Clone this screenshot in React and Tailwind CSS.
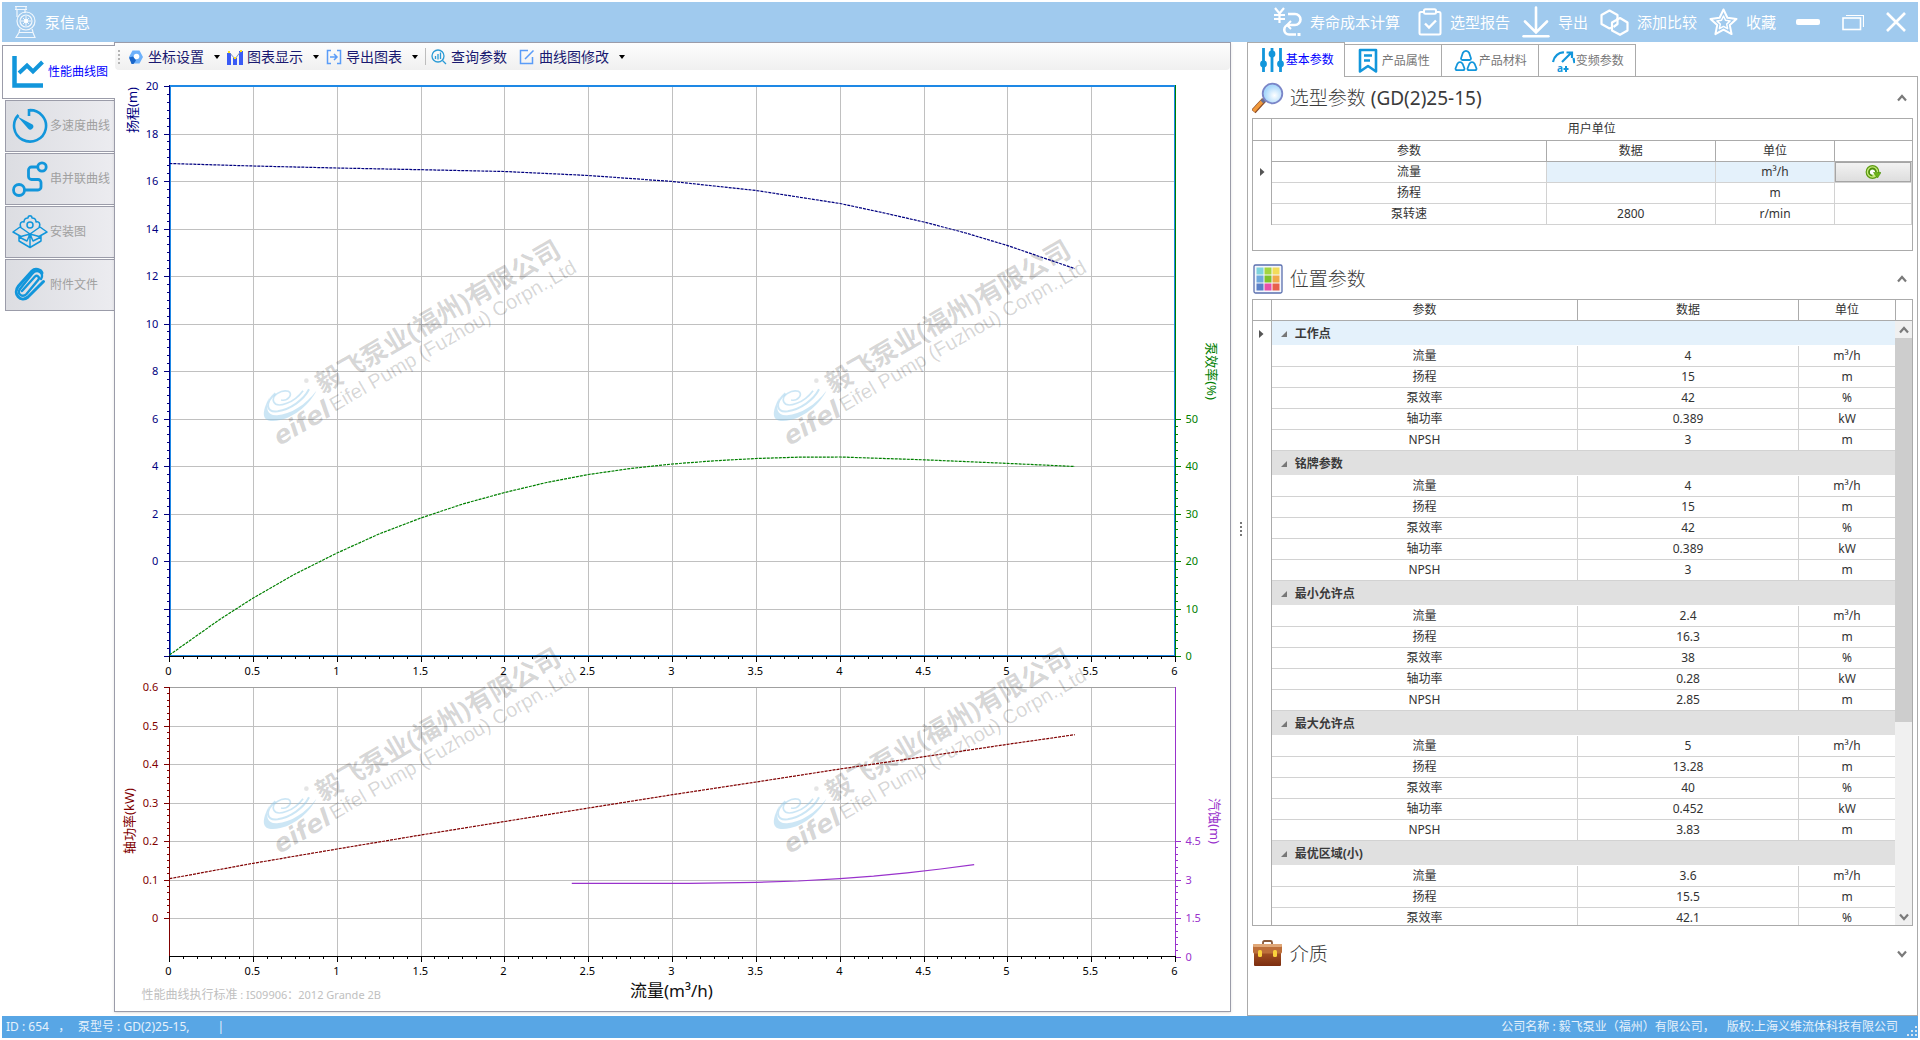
import React from "react";

const BLUE = "#1296db";

/* ---------- title bar icons ---------- */

const PumpIcon = () => (
  <svg viewBox="0 0 22 34" className="h-[34px] w-[22px]" fill="none" stroke="#fff" strokeOpacity="0.85" strokeWidth="1.2">
    <path d="M1 1.5h12M1 4.5h12M2 2v3M12 2v3M3 5v7M11 5v3" />
    <circle cx="12" cy="16" r="9" />
    <circle cx="12" cy="16" r="6" />
    <path d="M12 11v10M7 16h10M9 13l6 6M15 13l-6 6" strokeWidth="1" />
    <circle cx="12" cy="16" r="1.6" fill="#fff" />
    <path d="M6 24l-1 3M18 24l1 3M5 27.5h14l2 5H2z" />
  </svg>
);

const CostIcon = () => (
  <svg viewBox="0 0 28 30" className="h-[30px] w-7" fill="none" stroke="#fff" strokeWidth="2.6">
    <path d="M1 1l4.500 5.500L10 1M5.500 6v10M0 8h11M0 12h11" strokeWidth="2.200" />
    <path d="M14 7h7a5.500 5.500 0 0 1 0 11h-6a4.500 4.500 0 0 0 0 9.500h7" />
    <path d="M17 14l-4 4 4 4" strokeWidth="2" />
    <path d="M25 26v3" strokeWidth="3" />
  </svg>
);

const ReportIcon = () => (
  <svg viewBox="0 0 24 28" className="h-7 w-6" fill="none" stroke="#fff" strokeWidth="2">
    <rect x="1.500" y="4" width="21" height="22.500" rx="1.500" />
    <rect x="6" y="1.200" width="12" height="4.500" rx="1.500" fill="#a0caee" />
    <path d="M7 15.500l4 4 7-7" strokeWidth="2.400" />
  </svg>
);

const ExportIcon = () => (
  <svg viewBox="0 0 28 32" className="h-8 w-7" fill="none" stroke="#fff" strokeWidth="3" strokeLinecap="round">
    <path d="M14 1.500V26M3 15.500L14 26.500 25 15.500" strokeWidth="2.600" />
    <path d="M1.500 30.300h25" strokeWidth="2.400" />
  </svg>
);

const CompareIcon = () => (
  <svg viewBox="0 0 29 27" className="h-[27px] w-[29px]" fill="none" stroke="#fff" strokeWidth="2.200" strokeLinejoin="round">
    <path d="M12 18.500l-2.500 1L1.500 15V6L9.500 1.500l8 4.500v4" />
    <path d="M12 13.500l8-4.500 7.500 4.500v8L20 25.800l-8-4.300z" />
    <path d="M17.500 9v6l-4 3" />
  </svg>
);

const StarIcon = () => (
  <svg viewBox="0 0 29 28" className="h-7 w-[29px]" fill="none" stroke="#fff" strokeLinejoin="round">
    <path d="M14.500 1.500l3.900 8.300 9.100 1.100-6.700 6.200 1.800 9-8.100-4.500-8.100 4.500 1.800-9L1.500 10.900l9.100-1.100z" strokeWidth="2" />
    <path d="M14.500 8l2 4.300 4.600.6-3.400 3.200.9 4.600-4.100-2.300-4.100 2.300.9-4.600-3.400-3.200 4.600-.6z" strokeWidth="1.500" />
  </svg>
);

/* ---------- side navigation icons ---------- */

const LineChartIcon = () => (
  <svg viewBox="0 0 36 36" className="size-9" fill="none" stroke={BLUE}>
    <path d="M2.500 2v29.500H31" strokeWidth="4.500" />
    <path d="M7 19l8-7.500 6 6L30.500 8" strokeWidth="4" />
  </svg>
);

const GaugeIcon = () => (
  <svg viewBox="0 0 36 36" className="size-9" fill="none" stroke={BLUE} strokeWidth="2.600">
    <path d="M17 8V2.200A16 15.700 0 1 1 6.500 7" />
    <path d="M5.500 8.500l15 8a3 3 0 1 1-4.500 4z" fill={BLUE} stroke="none" />
  </svg>
);

const RouteIcon = () => (
  <svg viewBox="0 0 36 36" className="size-9" fill="none" stroke={BLUE} strokeWidth="2.800">
    <circle cx="7" cy="29" r="5.500" />
    <circle cx="30" cy="6" r="4.200" />
    <path d="M26 6h-6.500a3 3 0 0 0-3 3v6.500a3 3 0 0 0 3 3H26a3 3 0 0 1 3 3V26a3 3 0 0 1-3 3H12.500" />
  </svg>
);

const BoxIcon = () => (
  <svg viewBox="0 0 36 36" className="size-9" fill="none" stroke={BLUE} strokeWidth="1.500" strokeLinejoin="round">
    <path d="M9 13c-2-3 0-6 3-5 0-3 2-4 4-4 0-3 4-3 4 0 2 0 4 1 4 4 3-1 5 2 3 5" />
    <circle cx="18" cy="11" r="3" />
    <path d="M18 20L8 13l-7 5 8 4.500zM18 20l10-7 7 5-8 4.500zM7 21.500V27l11 6.500L29 27v-5.500M18 20v13.500M18 20l-3 7-8-4M18 20l3 7 8-4" />
  </svg>
);

const ClipIcon = () => (
  <svg viewBox="0 0 36 36" className="size-9" fill="none" stroke={BLUE} strokeWidth="3" strokeLinecap="round">
    <path d="M10 24L23 9.500c2-2 5 .5 3.500 3L14.500 27c-4 4-10 0-6.500-5L20 7c5-6 13-1 9 5" strokeWidth="2.400" />
    <path d="M20 4L6.500 19C0 27 9 36 16 30L31.500 14.500M20 4c3-3 9-1.500 10 2" />
  </svg>
);

/* ---------- toolbar icons ---------- */

const HexIcon = () => (
  <svg viewBox="0 0 16 16" className="mr-1 size-4">
    <path d="M4.500 1.500h7L15 8l-3.500 6.500h-7L1 8z" fill="#6db1fb" />
    <circle cx="8.500" cy="7.500" r="2.800" fill="#fff" />
    <path d="M1 8.500l4-1 3 4-2.500 3.500h-2z" fill="#1a66c9" />
  </svg>
);

const BarsIcon = () => (
  <svg viewBox="0 0 16 16" className="mr-1 size-4">
    <path d="M0 4h4v12H0zM6 9h4v7H6zM12 2h4v14h-4z" fill="#3a5bf5" />
    <path d="M2 3l6 7 6-8" stroke="#7f92b8" fill="none" />
    <path d="M1 2h2v2H1zM7 8h2v2H7zM13 1h2v2h-2z" fill="#ffe11a" />
  </svg>
);

const BracketIcon = () => (
  <svg viewBox="0 0 16 16" className="mr-1 size-4" fill="none" stroke="#5a9cf8" strokeWidth="1.500">
    <path d="M5 1.500H1.500v13H5M11 1.500h3.500v13H11M4 8h7M8 5l3 3-3 3" />
  </svg>
);

const QueryIcon = () => (
  <svg viewBox="0 0 16 16" className="mr-1 size-4" fill="none" stroke="#2a9bd6" strokeWidth="1.300">
    <circle cx="7" cy="7" r="6" />
    <path d="M11.500 11.500l3.500 3.500M4.500 7v3M7 5v5.500M9.500 3.500V10" />
  </svg>
);

const EditIcon = () => (
  <svg viewBox="0 0 16 16" className="mr-1 size-4" fill="none" stroke="#5a9cf8" strokeWidth="1.500">
    <path d="M9 1.500H1.500v13h12V8M6 10l8.500-8.500" />
  </svg>
);

const Caret = () => (
  <svg viewBox="0 0 23 6" className="h-[6px] w-[23px]">
    <path d="M10 1h6l-3 4z" fill="#000" />
  </svg>
);

/* ---------- right tab icons ---------- */

const SlidersIcon = () => (
  <svg viewBox="0 0 24 26" className="h-[26px] w-6" fill="none" stroke={BLUE} strokeWidth="2.800">
    <path d="M3.500 1v24M12 1v24M20.500 1v24" />
    <g fill={BLUE} stroke="none">
      <circle cx="3.500" cy="17" r="3.400" />
      <circle cx="12" cy="7" r="3.400" />
      <circle cx="20.500" cy="17" r="3.400" />
    </g>
  </svg>
);

const BookmarkIcon = () => (
  <svg viewBox="0 0 24 26" className="h-[26px] w-6" fill="none" stroke={BLUE} strokeWidth="2.600" strokeLinejoin="round">
    <path d="M3 2h16v21.500l-8-5.500-8 5.500zM7 7.500h8M7 12.500h6" />
  </svg>
);

const MaterialIcon = () => (
  <svg viewBox="0 0 24 26" className="h-[26px] w-6" fill="none" stroke={BLUE} strokeWidth="1.800" strokeLinejoin="round">
    <path d="M7 10.500L8.800 5c1.400-2.800 5-2.800 6.400 0L17 10.500c0 1.200-.6 1.500-1.500 1.500h-7C7.600 12 7 11.700 7 10.500z" />
    <path d="M1.500 20.500l1.800-4.500c1.400-2.400 4-2.400 5.400 0l1.800 4.500c0 1.200-.6 1.700-1.500 1.700H3c-.9 0-1.500-.5-1.500-1.700z" />
    <path d="M13.500 20.500l1.800-4.500c1.400-2.400 4-2.400 5.400 0l1.800 4.500c0 1.200-.6 1.700-1.500 1.700h-6c-.9 0-1.500-.5-1.500-1.700z" />
  </svg>
);

const FreqIcon = () => (
  <svg viewBox="0 0 24 26" className="h-[26px] w-6" fill="none" stroke={BLUE} strokeWidth="2.200">
    <path d="M2 14C3 8 8 4 13 4.500M11 14L20 5M15.500 4.500H21V10M22.500 10l1 5" />
    <text x="6" y="24" fontSize="10" fontWeight="700" fill={BLUE} stroke="none">a</text>
    <path d="M15 18v6M12.500 21h5" strokeWidth="2" />
  </svg>
);

/* ---------- section icons ---------- */

const LensIcon = () => (
  <svg viewBox="0 0 32 32" className="size-8">
    <defs>
      <radialGradient id="glass" cx="0.6" cy="0.6">
        <stop offset="0" stopColor="#ffffff" />
        <stop offset="1" stopColor="#a9d8fb" />
      </radialGradient>
    </defs>
    <path d="M1.500 29.500L12 18" stroke="#8a4a25" strokeWidth="5.500" />
    <path d="M1.500 29L12 17.500" stroke="#f29a3c" strokeWidth="3.500" />
    <path d="M10 20l4-4" stroke="#6a6f90" strokeWidth="4" />
    <circle cx="20.500" cy="11.500" r="9.800" fill="url(#glass)" stroke="#7b86c8" strokeWidth="1.800" />
  </svg>
);

const SWATCHES = ["#7fd3dc", "#a3d53f", "#f2dc5a", "#6fa8de", "#7ec22c", "#f0a94a", "#5a7fc8", "#e84fa8", "#e8604c"];

const PaletteIcon = () => (
  <svg viewBox="0 0 32 32" className="size-8">
    <rect x="2" y="2" width="28" height="28" rx="1.500" fill="#f4f7fd" stroke="#5a6fae" strokeWidth="1.300" />
    {SWATCHES.map((c, i) => (
      <rect key={c} x={4.5 + (i % 3) * 8} y={4.5 + Math.floor(i / 3) * 8} width="7" height="7" fill={c} />
    ))}
  </svg>
);

const CaseIcon = () => (
  <svg viewBox="0 0 32 32" className="size-8">
    <defs>
      <linearGradient id="leather" x1="0" x2="0" y1="0" y2="1">
        <stop offset="0" stopColor="#b4622f" />
        <stop offset="1" stopColor="#7c2d0f" />
      </linearGradient>
    </defs>
    <path d="M11 6V4.500Q11 3 12.500 3h6Q20 3 20 4.500V6" fill="none" stroke="#8a5a3a" strokeWidth="1.800" />
    <rect x="2" y="8" width="27" height="20" rx="1" fill="url(#leather)" />
    <path d="M1 6.500h29V14q0 1.500-2 1.500H3Q1 15.500 1 14z" fill="#bd6f3a" />
    <rect x="1" y="6" width="29" height="3" rx="1" fill="#e0a777" />
    <rect x="6" y="12" width="4" height="7" rx="1.500" fill="#fbd23c" />
    <rect x="21" y="12" width="4" height="7" rx="1.500" fill="#fbd23c" />
  </svg>
);

const RefreshIcon = () => (
  <svg viewBox="0 0 16 16" className="mx-auto size-4" fill="none">
    <circle cx="7.500" cy="8" r="6.300" stroke="#5c9a12" strokeWidth="1.200" fill="#c6ea7a" />
    <path d="M11 8a3.500 3.500 0 1 0-3.500 3.500" stroke="#4e8f0c" strokeWidth="1.800" fill="#fff" />
    <path d="M8.500 8.500H16L12.500 14z" fill="#6cb31a" stroke="#4e8f0c" strokeWidth="0.600" />
  </svg>
);

const Chevron = ({ down }) => (
  <svg viewBox="0 0 12 8" className="h-2 w-3" fill="none" stroke="#7a7a7a" strokeWidth="2.200">
    <path d={down ? "M2 1.500l4 4.500 4-4.500" : "M2 6.500L6 2l4 4.500"} />
  </svg>
);

/* ---------- chart ---------- */

const X0 = 169;
const XS = 1006 / 12;
const px = (i) => Math.round(X0 + i * XS) + 0.5;
const uy = (i) => Math.round(86 + i * 47.5) + 0.5;
const ly = (i) => Math.round(687 + i * 38.5) + 0.5;
const range = (n) => Array.from({ length: n }, (_, i) => i);

const curve = (pts) => pts.map(([q, y]) => `${X0 + q * 2 * XS},${y}`).join(" ");

const HEAD = [[0, 163.5], [0.5, 166], [1, 168], [1.5, 169.7], [2, 171.5], [2.5, 175.5], [3, 181.5], [3.25, 186], [3.5, 190.5], [3.75, 197], [4, 203.5], [4.25, 212.5], [4.5, 222], [4.75, 233], [5, 245.6], [5.4, 268.6]];
const EFF = [[0, 655], [0.3, 619.5], [0.5, 598], [0.75, 574], [1, 553], [1.25, 534], [1.5, 518], [1.75, 504], [2, 492.5], [2.25, 482.5], [2.5, 474.5], [2.75, 468.5], [3, 464], [3.25, 460.800], [3.5, 458.5], [3.75, 457.2], [4, 457], [4.5, 459.8], [5, 463.4], [5.4, 466.5]];
const POWER = [[0, 878.7], [0.5, 863.3], [1, 849], [1.5, 835], [2, 821.5], [2.5, 808], [3, 794.7], [3.5, 782], [4, 769], [4.5, 756.7], [5, 744.3], [5.4, 734.7]];
const NPSH = [[2.4, 883.4], [3.1, 883.3], [3.5, 882.3], [3.75, 881], [4, 878.7], [4.2, 876.2], [4.4, 872.8], [4.6, 869], [4.8, 864.7]];

const Ticks = ({ y, from, to, side, color }) => (
  <g stroke={color} shapeRendering="crispEdges">
    {range((to - from) * 6 + 1).map((k) => {
      const major = k % 6 === 0;
      const yy = y(from + k / 6);
      const len = major ? 5 : 2;
      return side === "left" ? (
        <line key={k} x1={169 - len} x2={169} y1={yy} y2={yy} />
      ) : (
        <line key={k} x1={1176} x2={1176 + len} y1={yy} y2={yy} />
      );
    })}
  </g>
);

const XAxis = ({ y }) => (
  <g>
    <g stroke="#000" shapeRendering="crispEdges">
      <line x1={169} x2={1176} y1={y} y2={y} />
      {range(73).map((k) => (
        <line key={k} x1={px(k / 6)} x2={px(k / 6)} y1={y} y2={y + (k % 6 === 0 ? 5.5 : 2.5)} />
      ))}
    </g>
    <g fill="#000" textAnchor="middle">
      {range(13).map((i) => (
        <text key={i} x={px(i) - 1.5} y={y + 18.5}>{i / 2}</text>
      ))}
    </g>
  </g>
);

const Watermark = ({ x, y }) => (
  <g transform={`translate(${x} ${y})`}>
    <g transform="scale(0.3333)" fill="none" stroke="#8fc8e8" strokeOpacity="0.45">
      <path d="M88 530C55 590 70 612 120 600C165 590 210 550 228 512C195 556 150 582 110 586C82 588 72 565 88 530Z" fill="#8fc8e8" fillOpacity="0.45" stroke="none" />
      <path d="M105 520C72 550 78 578 112 574C150 568 190 540 206 508" strokeWidth="6" />
      <path d="M188 512C160 550 110 566 100 546C92 526 124 508 144 514C160 522 142 545 122 540" strokeWidth="5" />
      <circle cx="198" cy="482" r="7" fill="#000" fillOpacity="0.1" stroke="none" />
    </g>
    <g fill="#000" fillOpacity="0.17">
      <text transform="translate(82 174) rotate(-30)" fontSize="26" fontWeight="700">毅飞泵业(福州)有限公司</text>
      <text transform="translate(94 192) rotate(-30)" fontSize="20" className="font-['Liberation_Sans',sans-serif]">Eifel Pump (Fuzhou) Corpn.,Ltd</text>
      <text transform="translate(39 226) rotate(-30)" fontSize="25" fontWeight="700" fontStyle="italic" className="font-['DejaVu_Sans',sans-serif]">eifel</text>
    </g>
  </g>
);

const Chart = () => (
  <svg viewBox="115 70 1114 941" className="block min-h-0 w-full flex-1" fontSize="11" role="img" aria-label="性能曲线图">
    <g stroke="#c0c0c0" shapeRendering="crispEdges">
      {range(11).map((i) => (
        <g key={i}>
          <line x1={px(i + 1)} x2={px(i + 1)} y1={86} y2={656} />
          <line x1={px(i + 1)} x2={px(i + 1)} y1={687} y2={957} />
          <line x1={170} x2={1175} y1={uy(i + 1)} y2={uy(i + 1)} />
        </g>
      ))}
      {range(6).map((i) => (
        <line key={i} x1={170} x2={1175} y1={ly(i + 1)} y2={ly(i + 1)} />
      ))}
      <line x1={170} x2={1175} y1={687.5} y2={687.5} stroke="#a0a0a0" />
    </g>

    <g shapeRendering="crispEdges">
      <path d="M170 85h1005v2H170zM170 85h1v571h-1zM1174 85h1v571h-1zM170 655h1005v1H170z" fill="#1e88e5" />
      <path d="M169 85h1v572h-1z" fill="#000080" />
      <path d="M1175 85h1v572h-1z" fill="#008000" />
      <path d="M169 687h1v270h-1z" fill="#800000" />
      <path d="M1175 687h1v270h-1z" fill="#9932cc" />
    </g>

    <XAxis y={656.5} />
    <XAxis y={956.5} />
    <Ticks y={uy} from={0} to={12} side="left" color="#000080" />
    <Ticks y={uy} from={7} to={12} side="right" color="#008000" />
    <Ticks y={ly} from={0} to={6} side="left" color="#800000" />
    <Ticks y={ly} from={4} to={7} side="right" color="#9932cc" />

    <g fill="#000080" textAnchor="end">
      {range(11).map((i) => (
        <text key={i} x={158} y={uy(i) + 3.5}>{20 - i * 2}</text>
      ))}
    </g>
    <g fill="#008000">
      {range(6).map((i) => (
        <text key={i} x={1185} y={uy(i + 7) + 3.5}>{50 - i * 10}</text>
      ))}
    </g>
    <g fill="#800000" textAnchor="end">
      {["0.6", "0.5", "0.4", "0.3", "0.2", "0.1", "0"].map((t, i) => (
        <text key={t} x={158} y={ly(i) + 3.5}>{t}</text>
      ))}
    </g>
    <g fill="#9932cc">
      {["4.5", "3", "1.5", "0"].map((t, i) => (
        <text key={t} x={1185} y={ly(i + 4) + 3.5}>{t}</text>
      ))}
    </g>

    <g fontSize="13" textAnchor="middle">
      <text transform="translate(137 110) rotate(-90)" fill="#000080">扬程(m)</text>
      <text transform="translate(134 821) rotate(-90)" fill="#800000">轴功率(kW)</text>
      <text transform="translate(1207 371) rotate(90)" fill="#008000">泵效率(%)</text>
      <text transform="translate(1210 821) rotate(90)" fill="#9932cc">汽蚀(m)</text>
    </g>
    <text x="671" y="997" fontSize="17" textAnchor="middle" fill="#111">流量(m³/h)</text>
    <text x="141" y="999" fontSize="12" fill="#c0c0c0">性能曲线执行标准<tspan fontSize="11"> : IS09906：2012 Grande 2B</tspan></text>

    <Watermark x={240} y={220} />
    <Watermark x={750} y={220} />
    <Watermark x={240} y={628} />
    <Watermark x={750} y={628} />

    <g fill="none">
      <polyline points={curve(HEAD)} stroke="#000080" strokeDasharray="3 1" strokeWidth="1.200" />
      <polyline points={curve(EFF)} stroke="#008000" strokeDasharray="3 1" strokeWidth="1.200" />
      <polyline points={curve(POWER)} stroke="#800000" strokeDasharray="3 1" strokeWidth="1.200" />
      <polyline points={curve(NPSH)} stroke="#9932cc" strokeWidth="1.200" />
    </g>
  </svg>
);

/* ---------- page parts ---------- */

const TitleBar = () => (
  <header className="flex h-10 shrink-0 items-center bg-[#a0caee] pl-3 pr-3 text-[15px] leading-5 text-white">
    <PumpIcon />
    <h1 className="ml-[9px]">泵信息</h1>
    <div className="ml-auto flex items-center gap-3">
      <button className="mr-1.5 flex items-center gap-2"><CostIcon />寿命成本计算</button>
      <button className="flex items-center gap-2"><ReportIcon />选型报告</button>
      <button className="flex items-center gap-2"><ExportIcon />导出</button>
      <button className="flex items-center gap-2"><CompareIcon />添加比较</button>
      <button className="flex items-center gap-2"><StarIcon />收藏</button>
      <div className="ml-2 flex items-center gap-[22px]">
        <button aria-label="最小化">
          <svg viewBox="0 0 24 20" className="h-5 w-6"><rect x="0" y="7" width="24" height="6" rx="2" fill="#fff" /></svg>
        </button>
        <button aria-label="还原">
          <svg viewBox="0 0 22 20" className="h-5 w-[22px]" fill="none" stroke="#fff">
            <path d="M4 3.500h17.500V15" strokeWidth="1.200" />
            <rect x="1" y="6" width="17.500" height="11.500" strokeWidth="1.600" />
          </svg>
        </button>
        <button aria-label="关闭">
          <svg viewBox="0 0 20 20" className="size-5" stroke="#fff" strokeWidth="2.600"><path d="M1 1l18 18M19 1L1 19" /></svg>
        </button>
      </div>
    </div>
  </header>
);

const NAV = [
  ["多速度曲线", GaugeIcon],
  ["串并联曲线", RouteIcon],
  ["安装图", BoxIcon],
  ["附件文件", ClipIcon],
];

const SideNav = () => (
  <nav className="flex w-28 shrink-0 flex-col gap-px pt-[3px] text-xs">
    <button className="relative z-10 -mr-px flex h-[54px] items-center whitespace-nowrap border border-r-0 border-[#9b9ca9] bg-white pl-[9px] text-[#0000ff]">
      <LineChartIcon />性能曲线图
    </button>
    {NAV.map(([label, Icon]) => (
      <button key={label} className="ml-[3px] flex h-[52px] items-center gap-0.5 whitespace-nowrap border border-r-0 border-[#9b9ca9] bg-linear-to-r from-[#dcdde2] to-[#ececf0] pl-1.5 text-[#a0a0a0]">
        <Icon />{label}
      </button>
    ))}
  </nav>
);

const Toolbar = () => (
  <div className="flex h-[27px] shrink-0 items-center rounded-b bg-linear-to-b from-[#fdfdfd] to-[#f0f0f0] pl-[3px] text-sm leading-5 text-[#191970]">
    <div className="mr-2 flex w-0.5 flex-col gap-0.5">
      {range(4).map((i) => <i key={i} className="size-0.5 bg-[#b5b5b5]" />)}
    </div>
    <button className="flex items-center"><HexIcon />坐标设置<Caret /></button>
    <button className="flex items-center"><BarsIcon />图表显示<Caret /></button>
    <button className="flex items-center"><BracketIcon />导出图表<Caret /></button>
    <div className="mr-[5px] h-[17px] w-px bg-[#bdbdbd]" />
    <button className="mr-3 flex items-center"><QueryIcon />查询参数</button>
    <button className="flex items-center"><EditIcon />曲线图修改<Caret /></button>
  </div>
);

const TABS = [
  ["产品属性", BookmarkIcon],
  ["产品材料", MaterialIcon],
  ["变频参数", FreqIcon],
];

const SectionHead = ({ icon, children, down }) => (
  <div className="flex h-9 items-center gap-1.5 pr-[5px] text-[19px] leading-6 text-[#3a3a3a]">
    {icon}
    <h2 className="font-light">{children}</h2>
    <button className="ml-auto" aria-label={down ? "展开" : "收起"}><Chevron down={down} /></button>
  </div>
);

const RowMark = () => (
  <svg viewBox="0 0 5 8" className="mx-auto h-2 w-[5px]"><path d="M0 0l4.500 4L0 8z" fill="#555" /></svg>
);

const ParamTable = () => {
  const head = "h-[21px] border border-t-0 border-[#ababab] font-normal";
  const cell = "h-[21px] border border-[#d2d2d2]";
  return (
    <div className="h-[133px] border border-[#ababab]">
      <table className="w-full table-fixed border-collapse text-center text-xs leading-4">
        <colgroup>
          <col className="w-[19px]" />
          <col className="w-[41.7%]" />
          <col className="w-[25.6%]" />
          <col className="w-[18.2%]" />
          <col />
        </colgroup>
        <thead>
          <tr>
            <th className={`${head} border-l-0`} />
            <th className={`${head} border-r-0`} colSpan={4}>用户单位</th>
          </tr>
          <tr>
            <th className={`${head} border-b-0 border-l-0`} />
            <th className={head}>参数</th>
            <th className={head}>数据</th>
            <th className={head}>单位</th>
            <th className={`${head} border-r-0`} />
          </tr>
        </thead>
        <tbody>
          <tr>
            <td className="border-r border-[#ababab]"><RowMark /></td>
            <td className={cell}>流量</td>
            <td className={`${cell} bg-[#e4f1fb]`} />
            <td className={`${cell} bg-[#e4f1fb]`}>m³/h</td>
            <td className={`${cell} p-0`}>
              <button aria-label="刷新" className="block h-5 w-full border border-[#a5a5a5] bg-linear-to-b from-[#f2f2f2] to-[#dedede]"><RefreshIcon /></button>
            </td>
          </tr>
          <tr>
            <td className="border-r border-[#ababab]" />
            <td className={cell}>扬程</td>
            <td className={cell} />
            <td className={cell}>m</td>
            <td className={cell} />
          </tr>
          <tr>
            <td className="border-r border-[#ababab]" />
            <td className={cell}>泵转速</td>
            <td className={cell}>2800</td>
            <td className={cell}>r/min</td>
            <td className={cell} />
          </tr>
        </tbody>
      </table>
    </div>
  );
};

const NAMES = [["流量", "m³/h"], ["扬程", "m"], ["泵效率", "%"], ["轴功率", "kW"], ["NPSH", "m"]];
const GROUPS = [
  ["工作点", ["4", "15", "42", "0.389", "3"]],
  ["铭牌参数", ["4", "15", "42", "0.389", "3"]],
  ["最小允许点", ["2.4", "16.3", "38", "0.28", "2.85"]],
  ["最大允许点", ["5", "13.28", "40", "0.452", "3.83"]],
  ["最优区域(小)", ["3.6", "15.5", "42.1"]],
];

const PositionTable = () => (
  <div className="flex h-[627px] min-h-0 overflow-hidden border border-[#ababab] text-xs leading-4">
    <div className="min-w-0 flex-1 overflow-hidden">
      <table className="w-full table-fixed border-separate border-spacing-0 text-center">
        <colgroup>
          <col className="w-[19px]" />
          <col className="w-[47.7%]" />
          <col className="w-[34.4%]" />
          <col />
        </colgroup>
        <thead>
          <tr>
            <th className="h-[21px] border-b border-r border-[#ababab] p-0" />
            <th className="border-b border-r border-[#ababab] p-0 font-normal">参数</th>
            <th className="border-b border-r border-[#ababab] p-0 font-normal">数据</th>
            <th className="border-b border-[#ababab] p-0 font-normal">单位</th>
          </tr>
        </thead>
        <tbody>
          {GROUPS.map(([title, values], g) => (
            <React.Fragment key={title}>
              <tr>
                <td className="border-r border-[#ababab] p-0">{g === 0 && <RowMark />}</td>
                <th colSpan={3} className={`h-[25px] border-b border-white p-0 text-left text-[#3a3a3a] ${g === 0 ? "bg-[#e4f1fb]" : "bg-[#e0e0e0]"}`}>
                  <span className="flex items-center gap-2 pl-[9px] pt-0.5">
                    <svg viewBox="0 0 6 6" className="size-1.5"><path d="M6 0v6H0z" fill="#777" /></svg>
                    {title}
                  </span>
                </th>
              </tr>
              {values.map((v, i) => (
                <tr key={i}>
                  <td className="h-[21px] border-r border-[#ababab] p-0" />
                  <td className="border-b border-r border-[#d2d2d2] p-0">{NAMES[i][0]}</td>
                  <td className="border-b border-r border-[#d2d2d2] p-0">{v}</td>
                  <td className="border-b border-[#d2d2d2] p-0">{NAMES[i][1]}</td>
                </tr>
              ))}
            </React.Fragment>
          ))}
        </tbody>
      </table>
    </div>
    <div className="flex w-[17px] shrink-0 flex-col items-center">
      <div className="h-[21px] w-full shrink-0 border-b border-l border-[#ababab]" />
      <div className="flex w-full flex-1 flex-col bg-[#f0f0f0]">
        <div className="flex h-[17px] items-center justify-center"><Chevron /></div>
        <div className="h-[384px] bg-[#cdcdcd]" />
        <div className="mt-auto flex h-[17px] items-center justify-center"><Chevron down /></div>
      </div>
    </div>
  </div>
);

const Aside = () => (
  <aside className="flex min-w-0 flex-[672] flex-col">
    <div className="flex h-[35px] shrink-0 items-end text-xs text-[#777]">
      <button className="relative z-10 flex h-[35px] w-[98px] items-center gap-0.5 whitespace-nowrap border border-b-0 border-[#ababab] bg-white pl-3 text-[#0000ff]"><SlidersIcon />基本参数</button>
      {TABS.map(([label, Icon]) => (
        <button key={label} className="flex h-[33px] w-[97px] items-center gap-px whitespace-nowrap border border-b-0 border-l-0 border-[#ababab] pl-3"><Icon />{label}</button>
      ))}
    </div>
    <div className="-mt-px flex min-h-0 flex-1 flex-col border border-[#ababab] pl-1 pr-1 pt-[3px] text-[#333]">
      <SectionHead icon={<LensIcon />}>选型参数 <span className="font-normal">(GD(2)25-15)</span></SectionHead>
      <div className="mt-0.5"><ParamTable /></div>
      <div className="mt-2.5"><SectionHead icon={<PaletteIcon />}>位置参数</SectionHead></div>
      <div className="mt-0.5"><PositionTable /></div>
      <div className="mt-2.5"><SectionHead icon={<CaseIcon />} down>介质</SectionHead></div>
    </div>
  </aside>
);

const StatusBar = () => (
  <footer className="flex h-[22px] shrink-0 items-center bg-[#58a6e5] pl-1 text-xs leading-4 text-[#e6f1fb]">
    <span className="w-[72px] whitespace-pre">ID : 654   ，</span>
    <span>泵型号 : GD(2)25-15,</span>
    <span className="ml-7">|</span>
    <span className="ml-auto">公司名称 : 毅飞泵业（福州）有限公司，</span>
    <span className="ml-3">版权:上海义维流体科技有限公司</span>
    <svg viewBox="0 0 12 12" className="ml-2 mt-2 size-3" fill="#d9e6f0">
      <path d="M9 1h2v2H9zM9 5h2v2H9zM5 5h2v2H5zM9 9h2v2H9zM5 9h2v2H5zM1 9h2v2H1z" />
    </svg>
  </footer>
);

export default function App() {
  return (
    <div className="flex h-screen flex-col overflow-hidden bg-white p-0.5 font-['Noto_Sans','Noto_Sans_CJK_SC',sans-serif]">
      <TitleBar />
      <div className="flex min-h-0 flex-1">
        <SideNav />
        <main className="mb-1 flex min-w-0 flex-[1116] flex-col border border-[#9b9ca9] shadow-sm">
          <Toolbar />
          <Chart />
        </main>
        <div className="flex w-4 shrink-0 flex-col items-center justify-center gap-0.5 pl-1">
          {range(4).map((i) => <i key={i} className="size-0.5 bg-[#777]" />)}
        </div>
        <Aside />
      </div>
      <StatusBar />
    </div>
  );
}
